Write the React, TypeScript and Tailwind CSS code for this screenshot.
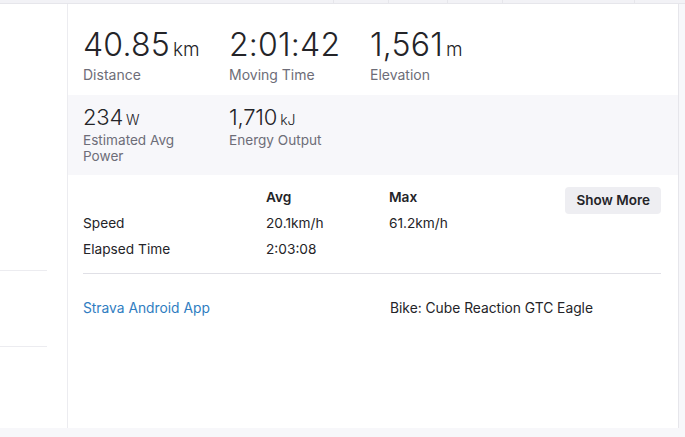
import React from 'react'

const stats = [
  { value: '40.85', unit: 'km', label: 'Distance' },
  { value: '2:01:42', unit: '', label: 'Moving Time' },
  { value: '1,561', unit: 'm', label: 'Elevation' },
]

const secondary = [
  { value: '234', unit: 'W', label: 'Estimated Avg Power' },
  { value: '1,710', unit: 'kJ', label: 'Energy Output' },
]

const rows = [
  { label: 'Speed', avg: '20.1km/h', max: '61.2km/h' },
  { label: 'Elapsed Time', avg: '2:03:08', max: '' },
]

export default function App() {
  return (
    <div
      className="w-[685px] h-[437px] bg-[#f7f7fa] flex flex-col overflow-hidden text-[#242428]"
      style={{ fontFamily: 'Inter, "Noto Sans", sans-serif' }}
    >
      {/* top tab strip */}
      <div className="h-[4px] flex border-b border-[#e6e6eb] bg-[#f2f2f6] shrink-0">
        <div className="w-[334px] border-r border-[#e6e6eb]" />
        <div className="w-[55px] border-r border-[#e6e6eb]" />
        <div className="w-[59px] border-r border-[#e6e6eb]" />
        <div className="w-[55px] border-r border-[#e6e6eb]" />
        <div className="w-[132px] border-r border-[#e6e6eb]" />
        <div className="flex-1" />
      </div>

      <div className="flex h-[424px] shrink-0">
        {/* left column */}
        <div className="w-[68px] bg-white border-r border-[#ececf0] flex flex-col">
          <div className="h-[266px]" />
          <div className="w-[47px] border-b border-[#ececf0]" />
          <div className="h-[75px]" />
          <div className="w-[47px] border-b border-[#ececf0]" />
        </div>

        {/* main panel */}
        <div className="w-[611px] bg-white border-r border-[#e6e6eb] flex flex-col">
          <div className="flex pl-[15px] pt-[22px] h-[91px]">
            {stats.map((s, i) => (
              <div key={s.label} className={i === 0 ? 'w-[146px]' : 'w-[141px]'}>
                <div className="h-[38px] leading-[38px] whitespace-nowrap">
                  <span className="text-[32px] font-light tracking-[0.2px]">{s.value}</span>
                  {s.unit && <span className="text-[19px] font-light ml-[3px]">{s.unit}</span>}
                </div>
                <div className="mt-[1px] text-[14px] leading-[20px] text-[#6d6d78]">{s.label}</div>
              </div>
            ))}
          </div>

          <div className="bg-[#f7f7fa] h-[80px] flex pl-[15px] pt-[9px]">
            {secondary.map((s, i) => (
              <div key={s.label} className={i === 0 ? 'w-[146px]' : 'w-[141px]'}>
                <div className="h-[26px] leading-[26px] whitespace-nowrap">
                  <span className="text-[22px] font-light tracking-[-0.2px]">{s.value}</span>
                  <span className="text-[14px] font-light ml-[3px]">{s.unit}</span>
                </div>
                <div className="mt-[2px] text-[13.6px] leading-[16px] text-[#6d6d78] w-[110px]">{s.label}</div>
              </div>
            ))}
          </div>

          <div className="mx-[15px] mr-[17px] pt-[9px] pb-[11px] border-b border-[#e0e0e6] relative">
            <div className="grid grid-cols-[183px_123px_1fr] text-[13.7px] leading-[26px]">
              <div />
              <div className="font-semibold">Avg</div>
              <div className="font-semibold">Max</div>
              {rows.map(r => (
                <React.Fragment key={r.label}>
                  <div>{r.label}</div>
                  <div>{r.avg}</div>
                  <div>{r.max}</div>
                </React.Fragment>
              ))}
            </div>
            <button className="absolute right-0 top-[12px] h-[27px] px-[11px] rounded-[4px] bg-[#eeeef2] text-[13.5px] font-semibold text-[#242428]">
              Show More
            </button>
          </div>

          <div className="flex pl-[15px] pt-[24px] text-[13.8px] leading-[20px]">
            <a className="w-[307px] text-[#2f7dc1]" href="#">Strava Android App</a>
            <span>Bike: Cube Reaction GTC Eagle</span>
          </div>
        </div>

        <div className="flex-1" />
      </div>
    </div>
  )
}
